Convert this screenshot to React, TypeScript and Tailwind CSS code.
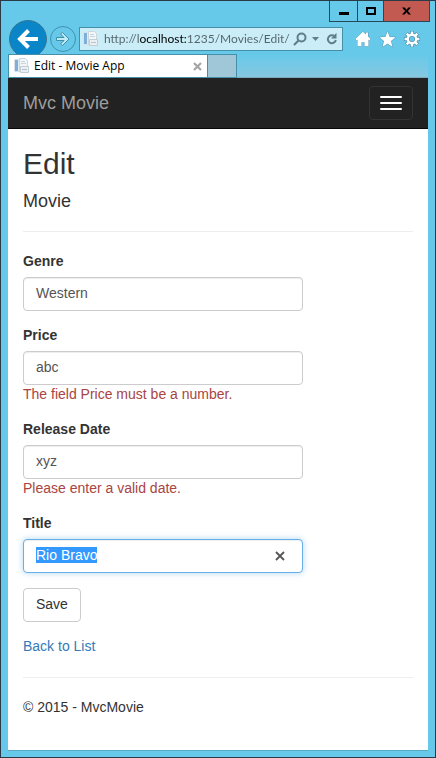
import { useEffect, useRef, useState } from "react";

function PageIcon() {
  return (
    <svg width="16" height="16" viewBox="0 0 16 16" className="shrink-0" aria-hidden="true">
      <path d="M0.500 1.500h5v12h-5z" fill="#e3ecf3" stroke="#d9e2e8" />
      <path d="M1 2h3v11H1z" fill="#7fb0da" />
      <path d="M5.500 0.500h6l2 2v11h-8z" fill="#f1f6fa" stroke="#ccd6dc" />
      <path d="M7 3.500h4M7 5.500h5" stroke="#c9d5de" />
      <path d="M6.500 8.500h8v6h-8z" fill="#e9eff3" stroke="#c2cdd4" />
      <path d="M8 11.500h5" stroke="#b6c3cc" />
    </svg>
  );
}

function TitleBar() {
  return (
    <div className="flex h-[22px] justify-end pr-[5px]">
      <div className="flex h-[21px] w-[101px] border-x border-b border-[#26485a] text-black">
        <button aria-label="Minimize" className="flex w-7 items-center justify-center border-r border-[#26485a]">
          <span className="mt-1 h-[3px] w-[10px] bg-black" />
        </button>
        <button aria-label="Maximize" className="flex w-[26px] items-center justify-center border-r border-[#26485a]">
          <span className="h-2 w-[10px] border-2 border-black" />
        </button>
        <button aria-label="Close" className="flex flex-1 items-center justify-center bg-[#c35a51]">
          <svg width="9" height="8" viewBox="0 0 10 8" aria-hidden="true">
            <path d="M0 0h3l2 2.500L7 0h3L6.500 4 10 8H7L5 5.500 3 8H0l3.500-4z" fill="#000" />
          </svg>
        </button>
      </div>
    </div>
  );
}

function Toolbar() {
  const [url, setUrl] = useState("http://localhost:1235/Movies/Edit/");
  return (
    <div className="flex h-8 items-center pr-[15px] pl-2">
      <button aria-label="Back" className="shrink-0">
        <svg width="38" height="38" viewBox="0 0 38 38" aria-hidden="true">
          <circle cx="19" cy="19" r="18.500" fill="#0a85c7" stroke="#3a7794" />
          <path d="M29 19H12M19.500 10.500L11 19l8.500 8.500" fill="none" stroke="#fff" strokeWidth="4" />
        </svg>
      </button>
      <button aria-label="Forward" className="ml-[3px] shrink-0">
        <svg width="26" height="26" viewBox="0 0 26 26" aria-hidden="true">
          <circle cx="13" cy="13" r="12.500" fill="#66c9e9" stroke="#4290ab" />
          <path
            d="M6.500 11.500h7.500l-3.500-3.500 2-1.500 6.500 6.500-6.500 6.500-2-1.500 3.500-3.500H6.500z"
            fill="#bfeaf7"
            stroke="#438fa8"
          />
        </svg>
      </button>
      <div className="ml-[3px] flex h-6 min-w-0 flex-1 items-center border border-[#458fa9] bg-[#caedf7] pl-[3px]">
        <PageIcon />
        <input
          aria-label="Address"
          value={url}
          onChange={(e) => setUrl(e.target.value)}
          className="ml-[5px] min-w-0 flex-1 bg-[linear-gradient(to_right,#526369_36px,#000_36px,#000_82px,#526369_82px)] bg-clip-text font-['Lato','Open_Sans',sans-serif] text-xs text-transparent caret-black outline-none"
        />
        <button aria-label="Search" className="ml-px">
          <svg width="14" height="14" viewBox="0 0 14 14" fill="none" stroke="#607f8a" aria-hidden="true">
            <circle cx="8.500" cy="5.500" r="4" strokeWidth="2" />
            <path d="M5.500 8.500L1 13" strokeWidth="2.200" />
          </svg>
        </button>
        <button aria-label="Show address history" className="ml-[5px]">
          <svg width="7" height="4" viewBox="0 0 7 4" aria-hidden="true">
            <path d="M0 0h7L3.500 4z" fill="#607f8a" />
          </svg>
        </button>
        <button aria-label="Refresh" className="mr-1 ml-[7px]">
          <svg width="12" height="14" viewBox="0 0 12 14" fill="none" aria-hidden="true">
            <path d="M8.500 4.200A4 4 0 1 0 9.800 8" stroke="#607f8a" strokeWidth="2" />
            <path d="M10.500 0.800v5.700H5z" fill="#607f8a" />
          </svg>
        </button>
      </div>
      <div className="ml-3 flex shrink-0 items-center gap-2">
        <button aria-label="Home">
          <svg width="16" height="16" viewBox="0 0 16 16" aria-hidden="true">
            <path
              d="M8 .8l3 2.700V1.500h2v3.900l2.700 2.600-1.400 1.400-.8-.8v6.600H9.500v-4h-3v4h-4V8.600l-.8.800L.3 8z"
              fill="#fff"
              stroke="#5296b2"
              strokeWidth="1"
              paintOrder="stroke"
            />
          </svg>
        </button>
        <button aria-label="Favorites">
          <svg width="17" height="17" viewBox="0 0 17 17" aria-hidden="true">
            <path
              d="M8.500.5l2.200 5.500 5.800.3-4.500 3.700 1.500 6-5-3.400-5 3.400 1.500-6L.5 6.300l5.800-.3z"
              fill="#fff"
              stroke="#5296b2"
              strokeWidth="1"
              paintOrder="stroke"
            />
          </svg>
        </button>
        <button aria-label="Tools">
          <svg width="16" height="16" viewBox="0 0 16 16" fill="none" aria-hidden="true">
            <g stroke="#4e90ab" strokeWidth="3.800">
              <path d="M8 0v3.500M8 12.500V16M0 8h3.500M12.500 8H16M2.400 2.400l2.400 2.400M11.200 11.200l2.400 2.400M2.400 13.600l2.400-2.400M11.200 4.800l2.400-2.400" />
              <circle cx="8" cy="8" r="4.200" />
            </g>
            <g stroke="#fff" strokeWidth="2.400">
              <path d="M8 .6v2.900M8 12.500v2.900M.6 8h2.900M12.500 8h2.900M2.700 2.700l2.100 2.100M11.200 11.200l2.100 2.100M2.700 13.300l2.100-2.100M11.200 4.800l2.100-2.100" />
              <circle cx="8" cy="8" r="4.200" />
            </g>
          </svg>
        </button>
      </div>
    </div>
  );
}

function TabStrip() {
  return (
    <div className="relative z-10 -mt-px flex h-6 px-[7px]">
      <div className="flex w-[200px] items-center border border-[#458fa9] bg-white px-[5px]">
        <PageIcon />
        <span className="ml-1 flex-1 font-['Open_Sans','Noto_Sans',sans-serif] text-xs text-black">Edit - Movie App</span>
        <button aria-label="Close tab">
          <svg width="9" height="9" viewBox="0 0 9 9" aria-hidden="true">
            <path d="M1 1l7 7M8 1L1 8" stroke="#a5a5a5" strokeWidth="2.200" />
          </svg>
        </button>
      </div>
      <button aria-label="New tab" className="w-[29px] border-y border-r border-[#458fa9] bg-[#a0c7d7]" />
      <div className="flex-1 border-b border-[#7fa9ba] bg-linear-to-b from-[#66c9ea] to-[#84c8df]" />
    </div>
  );
}

const control =
  "block h-[34px] w-full rounded border bg-white px-3 text-sm text-[#555] outline-none pt-[5px] pb-[7px]";

const labelText = "mb-[7px] block leading-[18px] font-bold";

function Field({ id, label, initial, error }: { id: string; label: string; initial: string; error?: string }) {
  const [value, setValue] = useState(initial);
  return (
    <div className="mb-[15px]">
      <label htmlFor={id} className={labelText}>
        {label}
      </label>
      <div className="w-[280px] max-w-full">
        <input
          id={id}
          value={value}
          onChange={(e) => setValue(e.target.value)}
          className={`${control} border-[#ccc] shadow-[inset_0_1px_1px_rgba(0,0,0,0.075)]`}
        />
      </div>
      {error && <p className="pb-[2px] leading-[18px] text-[#a94442]">{error}</p>}
    </div>
  );
}

function TitleField() {
  const [value, setValue] = useState("Rio Bravo");
  const ref = useRef<HTMLInputElement>(null);
  useEffect(() => {
    ref.current?.focus();
    ref.current?.select();
  }, []);
  return (
    <div className="mb-[15px]">
      <label htmlFor="title" className={labelText}>
        Title
      </label>
      <div className="relative w-[280px] max-w-full">
        <input
          id="title"
          ref={ref}
          value={value}
          onChange={(e) => setValue(e.target.value)}
          className={`${control} border-[#66afe9] pr-10 shadow-[inset_0_1px_1px_rgba(0,0,0,0.075),0_0_6px_rgba(102,175,233,0.5)] selection:bg-[#3399ff] selection:text-white`}
        />
        <button
          type="button"
          aria-label="Clear"
          onClick={() => setValue("")}
          className="absolute top-3 right-[18px]"
        >
          <svg width="10" height="10" viewBox="0 0 10 10" aria-hidden="true">
            <path d="M1 1l8 8M9 1L1 9" stroke="#555" strokeWidth="1.800" />
          </svg>
        </button>
      </div>
    </div>
  );
}

export default function App() {
  return (
    <div className="flex min-h-screen flex-col border border-[#2b3a47] bg-[#66c9ea]">
      <TitleBar />
      <Toolbar />
      <TabStrip />
      <div className="mx-[7px] mb-[6px] flex-1 border-b border-[#5aa9c4] bg-white font-['Liberation_Sans',Arial,sans-serif] text-sm/5 text-[#333]">
        <nav className="flex h-[51px] items-center justify-between border-b border-[#080808] bg-[#222] px-[15px]">
          <a href="#" className="text-lg/5 text-[#9d9d9d]">
            Mvc Movie
          </a>
          <button
            aria-label="Toggle navigation"
            className="flex h-[34px] w-11 flex-col items-center justify-center gap-1 rounded border border-[#333]"
          >
            <span className="h-[2px] w-[22px] rounded-[1px] bg-white" />
            <span className="h-[2px] w-[22px] rounded-[1px] bg-white" />
            <span className="h-[2px] w-[22px] rounded-[1px] bg-white" />
          </button>
        </nav>
        <main className="px-[15px] pt-[18px]">
          <h2 className="mb-[11px] text-[30px]/[33px]">Edit</h2>
          <h4 className="text-lg/5">Movie</h4>
          <hr className="my-5 border-[#eee]" />
          <form onSubmit={(e) => e.preventDefault()}>
            <Field id="genre" label="Genre" initial="Western" />
            <Field id="price" label="Price" initial="abc" error="The field Price must be a number." />
            <Field id="release" label="Release Date" initial="xyz" error="Please enter a valid date." />
            <TitleField />
            <button type="submit" className="mb-[15px] block h-[34px] rounded border border-[#ccc] bg-white px-3 pb-[2px]">
              Save
            </button>
          </form>
          <a href="#" className="block w-fit pb-[2px] leading-[18px] text-[#337ab7]">
            Back to List
          </a>
          <hr className="my-5 border-[#eee]" />
          <footer className="leading-[18px]">© 2015 - MvcMovie</footer>
        </main>
      </div>
    </div>
  );
}
